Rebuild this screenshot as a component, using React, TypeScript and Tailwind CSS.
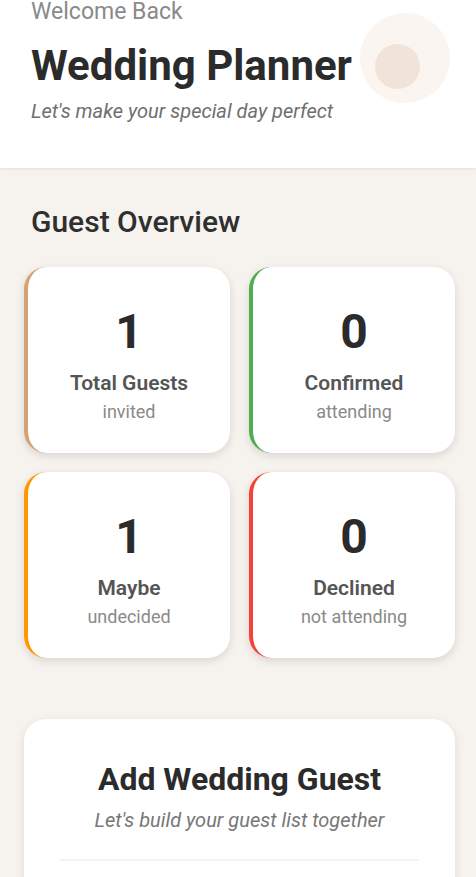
import React from "react";

type Stat = {
  value: number;
  label: string;
  sub: string;
  accent: string;
};

const stats: Stat[] = [
  { value: 1, label: "Total Guests", sub: "invited", accent: "border-l-[#d4a373]" },
  { value: 0, label: "Confirmed", sub: "attending", accent: "border-l-[#4caf50]" },
  { value: 1, label: "Maybe", sub: "undecided", accent: "border-l-[#ff9800]" },
  { value: 0, label: "Declined", sub: "not attending", accent: "border-l-[#f44336]" },
];

function StatCard({ stat }: { stat: Stat }) {
  return (
    <div
      className={`h-[186px] bg-white rounded-[22px] border-l-4 ${stat.accent} shadow-[0_3px_8px_rgba(0,0,0,0.12)] flex flex-col items-center pt-[37px]`}
    >
      <span className="text-[48px] leading-[56px] font-bold text-[#2b2b2b]">{stat.value}</span>
      <span className="mt-[10px] text-[21px] leading-[26px] font-semibold text-[#555]">{stat.label}</span>
      <span className="mt-[5px] text-[18px] leading-[22px] text-[#8a8a8a]">{stat.sub}</span>
    </div>
  );
}

export default function App() {
  return (
    <div className="w-[476px] h-[877px] overflow-hidden bg-[#f6f3ef] font-['Roboto',sans-serif]">
      <header className="relative bg-white h-[170px] px-[31px] shadow-[0_1px_3px_rgba(0,0,0,0.08)]">
        <p className="-mt-[2px] text-[23px] leading-[28px] text-[#8a8a8a]">Welcome Back</p>
        <h1 className="mt-[15px] text-[42px] leading-[50px] font-bold text-[#2b2b2b]">Wedding Planner</h1>
        <p className="mt-[8px] text-[20px] leading-[24px] italic text-[#6f6f6f]">
          Let's make your special day perfect
        </p>
        <div className="absolute left-[360px] top-[15px] w-[90px] h-[90px] rounded-full bg-[#faf5f1]">
          <div className="absolute left-[15px] top-[31px] w-[45px] h-[45px] rounded-full bg-[#f1e3d7]" />
        </div>
      </header>

      <section className="px-6 pt-[36px]">
        <h2 className="pl-[7px] text-[30px] leading-[36px] font-medium text-[#2f2f2f]">Guest Overview</h2>
        <div className="mt-[27px] grid grid-cols-2 gap-[19px] w-[431px]">
          {stats.map((s) => (
            <StatCard key={s.label} stat={s} />
          ))}
        </div>
      </section>

      <section className="px-6 pt-[61px]">
        <div className="w-[431px] bg-white rounded-[22px] shadow-[0_3px_10px_rgba(0,0,0,0.1)] pt-[40px] px-[36px] flex flex-col items-center">
          <h3 className="text-[32px] leading-[40px] font-bold text-[#2b2b2b]">Add Wedding Guest</h3>
          <p className="mt-[9px] text-[20px] leading-[24px] italic text-[#777]">
            Let's build your guest list together
          </p>
          <div className="mt-[27px] w-full h-[2px] bg-[#f3f3f3]" />
          <div className="h-[40px]" />
        </div>
      </section>
    </div>
  );
}
